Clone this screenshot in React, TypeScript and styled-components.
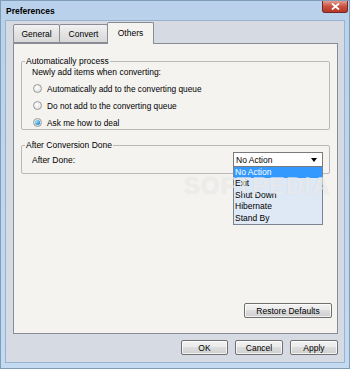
import React, { useState } from 'react';
import styled, { createGlobalStyle } from 'styled-components';

const Global = createGlobalStyle`
  html, body { margin: 0; padding: 0; }
  body { font-family: "Liberation Sans", Arial, sans-serif; font-size: 8px; color: #000; }
`;

const Window = styled.div`
  width: 350px;
  height: 369px;
  box-sizing: border-box;
  background: linear-gradient(#b9d1ea, #c4daf0);
  border: 1px solid #7f9db9;
  display: flex;
  flex-direction: column;
  padding: 0 4px 5px 4px;
`;

const TitleBar = styled.div`
  height: 19px;
  display: flex;
  align-items: center;
  justify-content: space-between;
`;

const Title = styled.div`
  font-weight: bold;
  font-size: 8.5px;
  padding-left: 1px;
  padding-top: 1px;
`;

const Close = styled.div`
  width: 26px;
  height: 12px;
  margin-top: -7px;
  margin-right: -3px;
  box-sizing: border-box;
  border: 1px solid #6f2a26;
  border-top: none;
  border-radius: 0 0 3px 3px;
  background: linear-gradient(#e39d90, #c9503f 50%, #b8382a);
  display: flex;
  align-items: center;
  justify-content: center;
`;

const Client = styled.div`
  flex: 1;
  background: #d6dae2;
  border: 1px solid #98b2d0;
  display: flex;
  flex-direction: column;
  padding: 1px 6px 0 7px;
`;

const TabStrip = styled.div`
  display: flex;
  align-items: flex-end;
  height: 21px;
  position: relative;
  z-index: 1;
`;

const Tab = styled.div<{ $active?: boolean; $w: number }>`
  width: ${p => p.$w}px;
  box-sizing: border-box;
  height: ${p => (p.$active ? 22 : 19)}px;
  margin-bottom: ${p => (p.$active ? -1 : 0)}px;
  margin-right: ${p => (p.$active ? 0 : -1)}px;
  border: 1px solid #898c95;
  border-bottom: ${p => (p.$active ? 'none' : '1px solid #898c95')};
  border-radius: 2px 2px 0 0;
  background: ${p => (p.$active ? '#f4f3f0' : 'linear-gradient(#f2f2f2, #e3e3e3 50%, #d9d9d9)')};
  display: flex;
  align-items: center;
  justify-content: center;
  font-size: 8.5px;
  padding-bottom: ${p => (p.$active ? 2 : 0)}px;
`;

const Panel = styled.div`
  height: 291px;
  box-sizing: border-box;
  background: #f4f3f0;
  border: 1px solid #898c95;
  padding: 12px 7px 15px 7px;
  display: flex;
  flex-direction: column;
  position: relative;
`;

const Group = styled.fieldset<{ $h: number }>`
  margin: 0;
  height: ${p => p.$h}px;
  box-sizing: border-box;
  border: 1px solid #b9b9b9;
  border-radius: 2px;
  padding: 0 0 0 10px;
  min-width: 0;
  position: relative;
`;

const Legend = styled.legend`
  padding: 0 1px;
  margin-left: -7px;
  font-size: 8.5px;
  line-height: 10px;
`;

const Caption = styled.div`
  font-size: 8.5px;
  line-height: 10px;
  margin: 1px 0 3px 0;
`;

const RadioRow = styled.div`
  display: flex;
  align-items: center;
  height: 17px;
  gap: 5px;
  font-size: 8.3px;
`;

const RadioDot = styled.span<{ $on?: boolean }>`
  width: 9px;
  height: 9px;
  box-sizing: border-box;
  border-radius: 50%;
  border: 1px solid #9a9a9a;
  background: radial-gradient(circle at 40% 40%, #ffffff, #d8d8d8);
  display: flex;
  align-items: center;
  justify-content: center;
  margin-left: 1px;
  &::after {
    content: '';
    display: ${p => (p.$on ? 'block' : 'none')};
    width: 5px;
    height: 5px;
    border-radius: 50%;
    background: radial-gradient(circle at 35% 35%, #a6e3ff, #1f8fd0 70%);
  }
`;

const Spacer = styled.div<{ $h: number }>`
  height: ${p => p.$h}px;
  flex: none;
`;

const DoneRow = styled.div`
  display: flex;
  align-items: center;
  justify-content: space-between;
  height: 23px;
  margin-top: -2px;
  padding-right: 6px;
  font-size: 8.5px;
`;

const SelectWrap = styled.div`
  position: relative;
  width: 90px;
`;

const SelectBox = styled.div`
  height: 15px;
  box-sizing: border-box;
  border: 1px solid #7a7a7a;
  background: #fff;
  display: flex;
  align-items: center;
  justify-content: space-between;
  padding: 0 5px 0 2px;
  font-size: 8.5px;
`;

const Arrow = styled.span`
  width: 0;
  height: 0;
  border-left: 3px solid transparent;
  border-right: 3px solid transparent;
  border-top: 4px solid #000;
`;

const DropList = styled.div`
  position: absolute;
  top: 15px;
  left: 0;
  width: 90px;
  box-sizing: border-box;
  border: 1px solid #7a8593;
  border-top: none;
  background: #dfe9f5;
  z-index: 5;
`;

const DropItem = styled.div<{ $sel?: boolean }>`
  height: 11.4px;
  line-height: 11.4px;
  padding-left: 1px;
  font-size: 8.5px;
  background: ${p => (p.$sel ? '#3399ff' : 'transparent')};
  color: ${p => (p.$sel ? '#fff' : '#000')};
`;

const Watermark = styled.div`
  position: absolute;
  left: 170px;
  top: 128px;
  font-size: 24px;
  font-weight: bold;
  letter-spacing: 1px;
  color: rgba(255, 255, 255, 0.55);
  text-shadow: 0 0 1px rgba(150, 150, 150, 0.3);
  font-family: "Liberation Sans", Arial, sans-serif;
  pointer-events: none;
  z-index: 6;
`;

const Filler = styled.div`
  flex: 1;
`;

const Btn = styled.button<{ $w: number }>`
  width: ${p => p.$w}px;
  height: 15px;
  box-sizing: border-box;
  padding: 0;
  border: 1px solid #707070;
  border-radius: 2px;
  background: linear-gradient(#f2f2f2, #ebebeb 45%, #dddddd 50%, #cfcfcf);
  font-family: "Liberation Sans", Arial, sans-serif;
  font-size: 8.5px;
  color: #000;
  box-shadow: inset 0 0 0 1px rgba(255, 255, 255, 0.7);
`;

const PanelFooter = styled.div`
  display: flex;
  justify-content: flex-end;
  margin-right: -2px;
`;

const ButtonRow = styled.div`
  display: flex;
  justify-content: flex-end;
  gap: 7px;
  margin-top: 6px;
`;

const options = ['No Action', 'Exit', 'Shut Down', 'Hibernate', 'Stand By'];
const radios = [
  'Automatically add to the converting queue',
  'Do not add to the converting queue',
  'Ask me how to deal',
];

export default function App() {
  const [tab] = useState('Others');
  const [choice] = useState(2);
  return (
    <>
      <Global />
      <Window>
        <TitleBar>
          <Title>Preferences</Title>
          <Close>
            <svg width="9" height="7" viewBox="0 0 9 7">
              <path d="M1 0.5 L8 6.5 M8 0.5 L1 6.5" stroke="#fff" strokeWidth="1.8" />
            </svg>
          </Close>
        </TitleBar>
        <Client>
          <TabStrip>
            <Tab $w={47} $active={tab === 'General'}>General</Tab>
            <Tab $w={49} $active={tab === 'Convert'}>Convert</Tab>
            <Tab $w={47} $active={tab === 'Others'}>Others</Tab>
          </TabStrip>
          <Panel>
            <Group $h={74}>
              <Legend>Automatically process</Legend>
              <Caption>Newly add items when converting:</Caption>
              {radios.map((r, i) => (
                <RadioRow key={r}>
                  <RadioDot $on={i === choice} />
                  {r}
                </RadioRow>
              ))}
            </Group>
            <Spacer $h={10} />
            <Group $h={34}>
              <Legend>After Conversion Done</Legend>
              <DoneRow>
                <span>After Done:</span>
                <SelectWrap>
                  <SelectBox>
                    <span>No Action</span>
                    <Arrow />
                  </SelectBox>
                  <DropList>
                    {options.map((o, i) => (
                      <DropItem key={o} $sel={i === 0}>{o}</DropItem>
                    ))}
                  </DropList>
                </SelectWrap>
              </DoneRow>
            </Group>
            <Watermark>SOFTPEDIA</Watermark>
            <Filler />
            <PanelFooter>
              <Btn $w={88}>Restore Defaults</Btn>
            </PanelFooter>
          </Panel>
          <ButtonRow>
            <Btn $w={47}>OK</Btn>
            <Btn $w={48}>Cancel</Btn>
            <Btn $w={48}>Apply</Btn>
          </ButtonRow>
        </Client>
      </Window>
    </>
  );
}
